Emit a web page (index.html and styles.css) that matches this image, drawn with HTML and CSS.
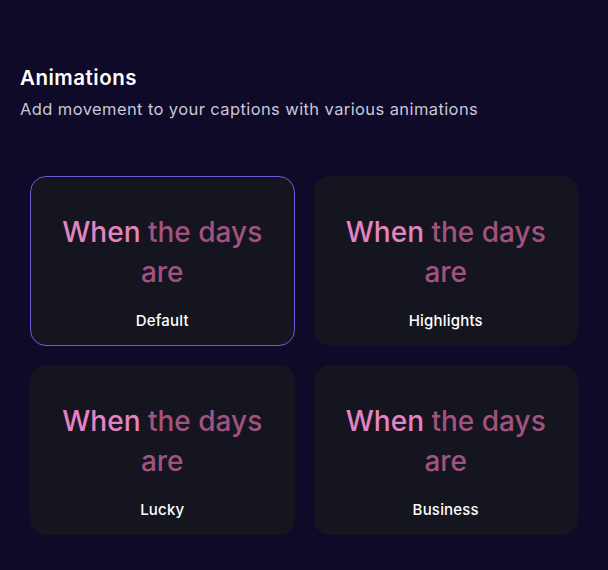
FILE: index.html
```html
<!DOCTYPE html>
<html lang="en">
<head>
<meta charset="utf-8">
<link rel="stylesheet" href="styles.css">
</head>
<body>
<main class="panel">
  <header class="head">
    <h1 class="title">Animations</h1>
    <p class="subtitle">Add movement to your captions with various animations</p>
  </header>
  <section class="grid">
    <div class="card selected">
      <p class="sample"><span class="hl">When</span> the days are</p>
      <span class="label">Default</span>
    </div>
    <div class="card">
      <p class="sample"><span class="hl">When</span> the days are</p>
      <span class="label">Highlights</span>
    </div>
    <div class="card">
      <p class="sample"><span class="hl">When</span> the days are</p>
      <span class="label">Lucky</span>
    </div>
    <div class="card">
      <p class="sample"><span class="hl">When</span> the days are</p>
      <span class="label">Business</span>
    </div>
  </section>
</main>
</body>
</html>
```
FILE: styles.css
```css
* { box-sizing: border-box; }
html, body {
  margin: 0;
  height: 100%;
  background: #0e0a27;
}
body {
  font-family: Inter, "Noto Sans", sans-serif;
  color: #ffffff;
}
.panel {
  padding: 64px 30px 0 20px;
}
.head {
  margin-bottom: 56px;
}
.title {
  margin: 0;
  font-size: 20.5px;
  font-weight: 600;
  letter-spacing: 0.5px;
  line-height: 27px;
  color: #ffffff;
}
.subtitle {
  margin: 7px 0 0;
  font-size: 16.5px;
  letter-spacing: 0.4px;
  line-height: 22px;
  color: #c9c7d8;
}
.grid {
  margin-left: 10px;
  display: grid;
  grid-template-columns: 1fr 1fr;
  column-gap: 19px;
  row-gap: 19px;
}
.card {
  height: 170px;
  border-radius: 16px;
  background: #15151f;
  border: 1.5px solid transparent;
  display: flex;
  flex-direction: column;
  align-items: center;
  padding-top: 35px;
}
.card.selected {
  border-color: #6b5bd8;
}
.sample {
  margin: 0;
  width: 214px;
  text-align: center;
  font-size: 28px;
  font-weight: 450;
  line-height: 40px;
  color: #a1527f;
}
.hl {
  color: #e583c2;
}
.label {
  margin-top: 19px;
  font-size: 15px;
  font-weight: 500;
  letter-spacing: 0.2px;
  line-height: 20px;
  color: #ffffff;
}
```
